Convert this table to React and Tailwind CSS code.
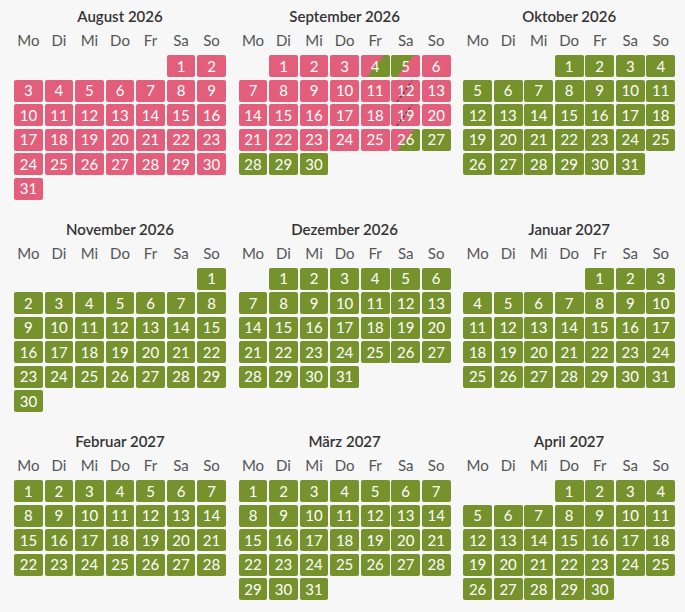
import React from "react";

const PINK = "bg-[#e35e7a]";
const GREEN = "bg-[#76922c]";

const WEEKDAYS = ["Mo", "Di", "Mi", "Do", "Fr", "Sa", "So"];

const MONTHS = [
  { name: "August 2026", year: 2026, month: 7 },
  { name: "September 2026", year: 2026, month: 8 },
  { name: "Oktober 2026", year: 2026, month: 9 },
  { name: "November 2026", year: 2026, month: 10 },
  { name: "Dezember 2026", year: 2026, month: 11 },
  { name: "Januar 2027", year: 2027, month: 0 },
  { name: "Februar 2027", year: 2027, month: 1 },
  { name: "März 2027", year: 2027, month: 2 },
  { name: "April 2027", year: 2027, month: 3 },
];

// status per day: "booked" | "free" | "in" (booked -> free) | "out" (free -> booked) | "blocked"
function dayStatus(year, month, day) {
  if (year === 2026 && month === 7) return "booked";
  if (year === 2026 && month === 8) {
    if (day === 4 || day === 26) return "in";
    if (day === 5) return "out";
    if (day === 12 || day === 19) return "blocked";
    if (day >= 27) return "free";
    return "booked";
  }
  return "free";
}

function DayCell({ day, status }) {
  let cls = GREEN;
  if (status === "booked" || status === "blocked") cls = PINK;
  if (status === "in") cls = "bg-[linear-gradient(128deg,#e35e7a_50%,#76922c_50%)]";
  if (status === "out") cls = "bg-[linear-gradient(128deg,#76922c_50%,#e35e7a_50%)]";

  return (
    <div
      className={`relative h-[22px] rounded-[2px] ${cls} flex items-center justify-center text-white text-[15px] leading-none`}
    >
      {day}
      {status === "blocked" && (
        <svg
          className="absolute inset-0 w-full h-full"
          viewBox="0 0 29 22"
          preserveAspectRatio="none"
        >
          <line
            x1="6"
            y1="22"
            x2="21"
            y2="1"
            stroke="#4b4b4b"
            strokeWidth="1.4"
            strokeDasharray="3 2"
          />
        </svg>
      )}
    </div>
  );
}

function Month({ name, year, month }) {
  const offset = (new Date(year, month, 1).getDay() + 6) % 7;
  const daysInMonth = new Date(year, month + 1, 0).getDate();
  const days = Array.from({ length: daysInMonth }, (_, i) => i + 1);

  return (
    <div className="w-[212px] h-[212.5px] pt-[6px]">
      <div className="text-center text-[15px] leading-[20px] font-semibold text-[#333]">
        {name}
      </div>
      <div className="mt-[4px] grid grid-cols-7 gap-x-[1.7px]">
        {WEEKDAYS.map((w) => (
          <div
            key={w}
            className="text-center text-[15px] leading-[20px] text-[#555]"
          >
            {w}
          </div>
        ))}
      </div>
      <div className="mt-[5px] grid grid-cols-7 gap-x-[1.7px] gap-y-[2.5px]">
        {Array.from({ length: offset }, (_, i) => (
          <div key={`e${i}`} />
        ))}
        {days.map((d) => (
          <DayCell key={d} day={d} status={dayStatus(year, month, d)} />
        ))}
      </div>
    </div>
  );
}

export default function App() {
  return (
    <div
      className="min-h-screen bg-[#f7f7f7] pl-[14px]"
      style={{ fontFamily: "Lato, 'Open Sans', sans-serif" }}
    >
      <div className="grid grid-cols-[repeat(3,212px)] gap-x-[12.6px]">
        {MONTHS.map((m) => (
          <Month key={m.name} {...m} />
        ))}
      </div>
    </div>
  );
}
